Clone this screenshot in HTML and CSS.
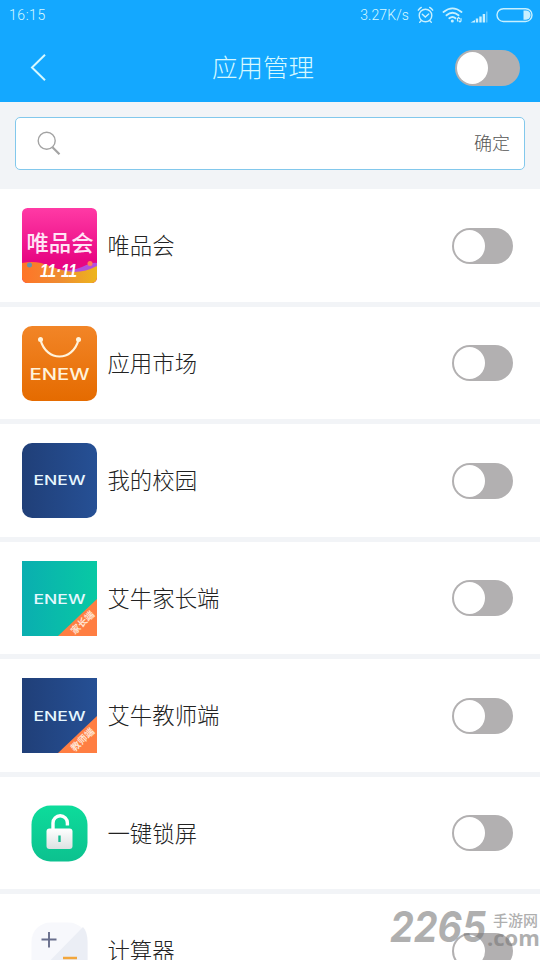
FILE: index.html
```html
<!DOCTYPE html>
<html lang="zh-CN">
<head>
<meta charset="utf-8">
<title>应用管理</title>
<link rel="stylesheet" href="styles.css">
</head>
<body>
<div class="screen">
  <header class="header">
    <div class="status">
      <span class="time">16:15</span>
      <span class="speed">3.27K/s</span>
      <svg class="status-icons" width="125" height="20" viewBox="0 0 125 20" fill="none" stroke="#c8f0ff" stroke-width="1.4" stroke-linecap="round">
        <circle cx="10.5" cy="10.5" r="6.3"/>
        <path d="M7.3 9.3l3 2.7 3.4-3M3.3 5.2a9 9 0 0 1 3-2.8M14.7 2.4a9 9 0 0 1 3 2.8M6.2 15.8l-1.5 1.4M14.8 15.8l1.5 1.4"/>
        <path d="M28.500 7q9-7.200 18 0M31.500 10.300q6-5 12 0M34.300 13.300q3.200-2.600 6.200 0" stroke-width="1.800"/>
        <circle cx="37.300" cy="16" r="1.500" fill="#c8f0ff" stroke="none"/>
        <path d="M42.500 16v-2.500l1-1 1 1M46 13.500V16l-1 1-1-1" stroke-width="1.200"/>
        <g stroke="none" fill="#c8f0ff"><path d="M55.500 17.500l4.500-2.500v2.500z"/><path d="M60.800 13.500h2.400v4h-2.400zM64.300 11.500h2.400v6h-2.400zM67.700 9h2.400v8.500h-2.400z"/><path d="M71 6.500h1.500v11h-1.500z" opacity=".45"/></g>
        <rect x="82" y="3.700" width="35" height="12.800" rx="6.400"/>
        <path d="M108.500 5.500h2.500a4.600 4.600 0 0 1 0 9.200h-2.500z" fill="#c8f0ff" stroke="none"/>
      </svg>
    </div>
    <div class="titlebar">
      <svg class="back" width="16" height="27" viewBox="0 0 16 27" fill="none" stroke="#d6f8ff" stroke-width="2"><path d="M15 .8L2 13.500l13 12.700"/></svg>
      <h1 class="title">应用管理</h1>
      <span class="switch switch-lg"></span>
    </div>
  </header>

  <div class="search-area">
    <div class="search">
      <svg width="24" height="25" viewBox="0 0 24 25" fill="none" stroke="#a3a3a3"><circle cx="9.700" cy="9.700" r="8.500" stroke-width="1.400"/><path d="M15.500 16.200l7 7" stroke-width="2.200"/></svg>
      <span class="confirm">确定</span>
    </div>
  </div>

  <main class="list">
    <div class="row">
      <svg class="icon" viewBox="0 0 75 75">
        <defs>
          <linearGradient id="pink" x2="0" y2="1"><stop stop-color="#ff3aa5"/><stop offset=".7" stop-color="#e80783"/></linearGradient>
          <linearGradient id="gold"><stop stop-color="#ff7427"/><stop offset=".5" stop-color="#ef8c32"/><stop offset="1" stop-color="#edb51d"/></linearGradient>
          <clipPath id="vip"><rect width="75" height="75" rx="5.500"/></clipPath>
        </defs>
        <g clip-path="url(#vip)">
          <rect width="75" height="75" fill="url(#pink)"/>
          <path d="M37 61q12 3 23-2t15-4v12H37z" fill="#b450dc"/>
          <path d="M0 55q10-2 19 0 9 3 17 6 20 7 39-3v17H0z" fill="url(#gold)"/>
          <circle cx="7.500" cy="57" r="2.500" fill="#6592b0"/>
          <circle cx="68" cy="55.500" r="2.500" fill="#ff8055"/>
        </g>
        <text class="vip-name" x="4.500" y="43" textLength="67" lengthAdjust="spacingAndGlyphs">唯品会</text>
        <text class="vip-date" x="18" y="69" textLength="37" lengthAdjust="spacingAndGlyphs">11·11</text>
      </svg>
      <span class="name">唯品会</span><span class="switch"></span>
    </div>
    <div class="row">
      <svg class="icon" viewBox="0 0 75 75">
        <defs><linearGradient id="orange" x2="0" y2="1"><stop stop-color="#f28527"/><stop offset="1" stop-color="#e56b00"/></linearGradient></defs>
        <rect width="75" height="75" rx="10" fill="url(#orange)"/>
        <path d="M18.500 14c6 22 32 22 38 0" fill="none" stroke="#fff3dc" stroke-width="2.200"/>
        <circle cx="18.500" cy="13.500" r="2.500" fill="#fff3dc"/><circle cx="56.500" cy="13.500" r="2.500" fill="#fff3dc"/>
        <text class="enew enew-market" x="7.500" y="53.500" textLength="60" lengthAdjust="spacingAndGlyphs">ENEW</text>
      </svg>
      <span class="name">应用市场</span><span class="switch"></span>
    </div>
    <div class="row">
      <svg class="icon" viewBox="0 0 75 75">
        <defs><linearGradient id="navy" x2="1" y2="0"><stop stop-color="#203f78"/><stop offset="1" stop-color="#265095"/></linearGradient></defs>
        <rect width="75" height="75" rx="10" fill="url(#navy)"/>
        <text class="enew" x="11.500" y="42" textLength="52" lengthAdjust="spacingAndGlyphs">ENEW</text>
      </svg>
      <span class="name">我的校园</span><span class="switch"></span>
    </div>
    <div class="row">
      <svg class="icon" viewBox="0 0 75 75">
        <defs><linearGradient id="teal"><stop stop-color="#0aaeb0"/><stop offset="1" stop-color="#08c9a4"/></linearGradient></defs>
        <rect width="75" height="75" fill="url(#teal)"/>
        <path d="M75 38v37H36z" fill="#ff7e42"/>
        <text class="enew" x="11.500" y="42.500" textLength="52" lengthAdjust="spacingAndGlyphs">ENEW</text>
        <text class="ribbon" transform="translate(60.500 61.500) rotate(-44)" y="3.500">家长端</text>
      </svg>
      <span class="name">艾牛家长端</span><span class="switch"></span>
    </div>
    <div class="row">
      <svg class="icon" viewBox="0 0 75 75">
        <rect width="75" height="75" fill="url(#navy)"/>
        <path d="M75 38v37H36z" fill="#ff7e42"/>
        <text class="enew" x="11.500" y="42.500" textLength="52" lengthAdjust="spacingAndGlyphs">ENEW</text>
        <text class="ribbon" transform="translate(60.500 61.500) rotate(-44)" y="3.500">教师端</text>
      </svg>
      <span class="name">艾牛教师端</span><span class="switch"></span>
    </div>
    <div class="row">
      <svg class="icon" viewBox="0 0 75 75">
        <defs><linearGradient id="green" x2="0" y2="1"><stop stop-color="#0ddc9b"/><stop offset="1" stop-color="#0cc18f"/></linearGradient>
        <linearGradient id="lock" x2="0" y2="1"><stop stop-color="#fff"/><stop offset="1" stop-color="#dce2e2"/></linearGradient></defs>
        <rect x="9.500" y="9.500" width="56" height="56" rx="19" fill="url(#green)"/>
        <path d="M31 35v-8a7.200 7.200 0 0 1 14.400 0v2.500" fill="none" stroke="#fff" stroke-width="3.400"/>
        <rect x="24.500" y="32.500" width="26" height="20.500" rx="3" fill="url(#lock)"/>
        <path d="M37.500 39.500v6.500" stroke="#15bd91" stroke-width="2.400"/>
      </svg>
      <span class="name">一键锁屏</span><span class="switch"></span>
    </div>
    <div class="row">
      <svg class="icon" viewBox="0 0 75 75">
        <rect x="9.500" y="9.500" width="56" height="56" rx="19" fill="#f7f8fc"/>
        <path d="M61 14q4.500 5 4.500 14.500v18a19 19 0 0 1-19 19h-18q-9-1-13-5z" fill="#ebeef5"/>
        <path d="M27 19v15.500M19.500 26.500h15" stroke="#686e8c" stroke-width="1.900"/>
        <path d="M41 45h14" stroke="#f2a63c" stroke-width="2.500"/>
      </svg>
      <span class="name">计算器</span><span class="switch"></span>
    </div>
  </main>

  <div class="watermark">
    <svg class="wm-number" width="97" height="38" viewBox="0 0 97 38"><text x="0" y="34" textLength="96" lengthAdjust="spacingAndGlyphs">2265</text></svg>
    <span class="wm-side"><span class="wm-site">手游网</span><span class="wm-com">.com</span></span>
  </div>
</div>
</body>
</html>
```

FILE: styles.css
```css
* { box-sizing: border-box; }
body {
  margin: 0;
  font-family: Roboto, "Noto Sans CJK SC", sans-serif;
  font-weight: 300;
  background: #fff;
}
.screen {
  position: relative;
  width: 540px;
  height: 960px;
  overflow: hidden;
  background: #f2f4f7;
}
.header {
  height: 102px;
  background: #14a8ff;
  color: #d6f8ff;
}
.status {
  display: flex;
  align-items: center;
  height: 30px;
  padding: 0 0 0 9px;
  font-size: 14px;
}
.time { letter-spacing: .55px; }
.speed { margin-left: auto; letter-spacing: .1px; }
.status-icons { margin-left: 6px; }
.titlebar {
  display: grid;
  grid-template-columns: 100px 1fr 100px;
  align-items: center;
  height: 75px;
  padding: 0 20px 0 30px;
}
.back { display: block; }
.title {
  margin: 0 0 0 -20px;
  padding-right: 4px;
  text-align: center;
  font-size: 25.500px;
  font-weight: 300;
  line-height: 36px;
}
.switch {
  display: block;
  width: 61px;
  height: 36px;
  padding: 2px;
  border-radius: 18px;
  background: #b2b0b1;
}
.switch::before {
  content: "";
  display: block;
  width: 31px;
  height: 32px;
  border-radius: 50%;
  background: #fff;
}
.switch-lg { width: 65px; justify-self: end; }
.search-area { height: 87.400px; padding: 15px; }
.search {
  display: flex;
  align-items: center;
  justify-content: space-between;
  height: 53px;
  padding: 0 14px 0 21px;
  border: 1px solid #82c8ec;
  border-radius: 5px;
  background: #fff;
}
.confirm { font-size: 18px; line-height: 24px; color: #555; }
.list { display: grid; gap: 5px; }
.row {
  display: flex;
  align-items: center;
  height: 112.500px;
  padding: 0 27px 0 22.400px;
  background: #fff;
}
.icon { display: block; width: 75px; height: 75px; margin-right: 10.100px; }
.name {
  flex: 1;
  padding-top: 1px;
  font-size: 22.400px;
  line-height: 32px;
  color: #222;
}
.vip-name { font: 500 22px "Noto Sans CJK SC", sans-serif; fill: #ffe6f6; }
.vip-date { font: italic 700 18px "Liberation Sans", sans-serif; fill: #fff; }
.enew { font: 500 13.500px Inter, sans-serif; fill: #e6f7ff; }
.enew-market { font-size: 15.500px; fill: #fff3dc; }
.ribbon { font: 700 9.500px "Noto Sans CJK SC", sans-serif; fill: #ffe3d2; text-anchor: middle; }
.watermark {
  position: absolute;
  left: 390px;
  top: 908px;
  display: flex;
  color: #777;
  opacity: .58;
}
.wm-number {
  display: block;
  font: italic 700 42px Inter, sans-serif;
  fill: currentColor;
}
.wm-side { display: flex; flex-direction: column; }
.wm-site { padding-left: 6px; font: 500 15px/16px "Noto Sans CJK SC", sans-serif; margin-top: 4px; }
.wm-com { font: 700 22px/18px "Open Sans", sans-serif; margin-top: 0; }
```
